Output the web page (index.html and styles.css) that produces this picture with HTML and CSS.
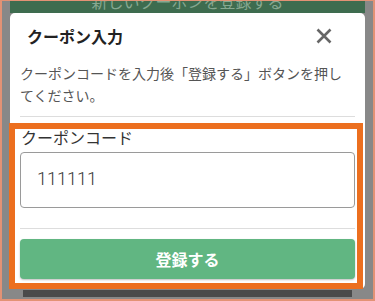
FILE: index.html
```html
<!DOCTYPE html>
<html lang="ja">
<head>
<meta charset="utf-8">
<link rel="stylesheet" href="styles.css">
</head>
<body>
<div class="frame">
  <div class="page">
    <div class="topbar"><span class="topbar-text">新しいクーポンを登録する</span></div>
    <div class="modal">
      <div class="modal-head">
        <span class="modal-title">クーポン入力</span>
        <svg class="close" width="16" height="16" viewBox="0 0 16 16"><path d="M1.5 1.5 L14.5 14.5 M14.5 1.5 L1.5 14.5" stroke="#666" stroke-width="2.6" stroke-linecap="butt" fill="none"/></svg>
      </div>
      <p class="modal-desc">クーポンコードを入力後「登録する」ボタンを押してください。</p>
      <div class="modal-body">
        <label class="field-label">クーポンコード</label>
        <div class="field-input">111111</div>
        <div class="sep"></div>
        <button class="submit">登録する</button>
      </div>
      <div class="highlight"></div>
    </div>
    <div class="under"></div>
  </div>
</div>
</body>
</html>
```
FILE: styles.css
```css
* { box-sizing: border-box; }
html, body { margin: 0; padding: 0; }
body { width: 375px; height: 301px; overflow: hidden; font-family: "Noto Sans CJK JP", "Noto Sans", sans-serif; }
.frame {
  width: 375px;
  height: 301px;
  background: #888888;
  border-style: solid;
  border-color: #e39275;
  border-width: 1px 2px 2px 2px;
  overflow: hidden;
}
.page { margin: 0 8px; }
.topbar {
  height: 12px;
  background: #3e6c4f;
  overflow: hidden;
  text-align: center;
}
.topbar-text {
  display: block;
  font-size: 16px;
  line-height: 16px;
  margin-top: -8px;
  color: #86a891;
}
.modal {
  position: relative;
  background: #fff;
  border-radius: 5px;
  height: 276px;
}
.modal-head {
  display: flex;
  align-items: center;
  justify-content: space-between;
  padding: 12px 33px 15px 17px;
  height: 49px;
}
.modal-title {
  font-size: 16px;
  font-weight: 700;
  line-height: 22px;
  color: #222;
}
.close { display: block; }
.modal-desc {
  margin: 0 10px;
  padding-bottom: 10px;
  border-bottom: 1px solid #dddddd;
  font-size: 14px;
  line-height: 22px;
  color: #555;
}
.modal-body {
  padding: 9px 10px 10px;
}
.field-label {
  display: block;
  font-size: 16px;
  line-height: 22px;
  color: #333;
  margin-bottom: 4px;
  padding-left: 1px;
}
.field-input {
  height: 56px;
  border: 1px solid #9a9a9a;
  border-radius: 4px;
  padding-left: 16px;
  font-family: Roboto, "Noto Sans", sans-serif;
  font-size: 18px;
  font-weight: 300;
  line-height: 52px;
  color: #333;
}
.sep {
  margin-top: 20px;
  border-top: 1px solid #dddddd;
}
.submit {
  display: block;
  width: 100%;
  height: 40px;
  margin-top: 10px;
  border: 0;
  border-radius: 4px;
  background: #61b682;
  box-shadow: 0 1px 2px rgba(0,0,0,0.25);
  color: #fff;
  font-family: "Noto Sans CJK JP", sans-serif;
  font-size: 16px;
  font-weight: 700;
}
.highlight {
  position: absolute;
  left: -1px;
  top: 110px;
  width: 354px;
  height: 166px;
  border: 6px solid #ec6f1f;
}
.under {
  margin: 1px 13px 0;
  height: 7px;
  background: #4a4a4a;
}
```
